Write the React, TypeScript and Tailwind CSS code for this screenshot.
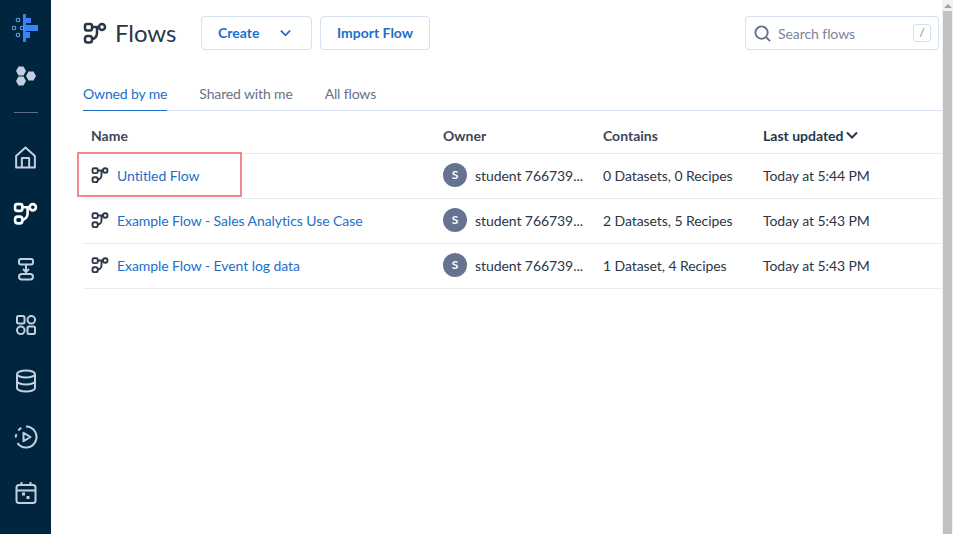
const FlowIcon = ({ className }: { className: string }) => (
  <svg viewBox="0 0 24 24" fill="none" stroke="currentColor" strokeWidth="2.5" className={className}>
    <rect x="2" y="3" width="7" height="6.5" rx="2" />
    <rect x="2" y="15" width="7" height="6.5" rx="2.6" />
    <circle cx="19" cy="6" r="3" />
    <path d="M9 6h7M14 6v6c0 3-2 6-5 6" />
  </svg>
);

const Chevron = ({ className }: { className: string }) => (
  <svg viewBox="0 0 12 8" fill="none" stroke="currentColor" strokeWidth="2" className={className}>
    <path d="M1 1.5l5 5 5-5" />
  </svg>
);

const rows = [
  { name: "Untitled Flow", contains: "0 Datasets, 0 Recipes", updated: "Today at 5:44 PM" },
  { name: "Example Flow - Sales Analytics Use Case", contains: "2 Datasets, 5 Recipes", updated: "Today at 5:43 PM" },
  { name: "Example Flow - Event log data", contains: "1 Dataset, 4 Recipes", updated: "Today at 5:43 PM" },
];

function Sidebar() {
  const c = "text-[#c3cfe0]";
  const item = "h-[56px] flex items-center justify-center";
  return (
    <aside className="w-[51px] shrink-0 h-full bg-[#00263f] flex flex-col items-center">
      <svg viewBox="0 0 28 30" className="w-[28px] h-[30px] mt-[13px]" fill="none">
        <rect x="11" y="1" width="3" height="28" fill="#3b82f6" />
        <rect x="14" y="5" width="5" height="5" fill="#3b82f6" />
        <rect x="14" y="12" width="12" height="6" fill="#3b82f6" />
        <rect x="14" y="19" width="4" height="6" fill="#3b82f6" />
        <circle cx="6" cy="7" r="1.800" stroke="#6f9fe8" strokeWidth="1.100" />
        <circle cx="2" cy="15" r="1.800" stroke="#6f9fe8" strokeWidth="1.100" />
        <circle cx="10" cy="15" r="1.800" stroke="#6f9fe8" strokeWidth="1.100" />
        <circle cx="6" cy="22" r="1.800" stroke="#6f9fe8" strokeWidth="1.100" />
      </svg>
      <svg viewBox="0 0 20 20" className="w-[20px] h-[20px] mt-[23px]" fill="#c3cfe0">
        <polygon points="0,5 2.500,0.400 7.500,0.400 10,5 7.500,9.600 2.500,9.600" />
        <polygon points="10,10 12.500,5.400 17.500,5.400 20,10 17.500,14.600 12.500,14.600" />
        <polygon points="0,15 2.500,10.400 7.500,10.400 10,15 7.500,19.600 2.500,19.600" />
      </svg>
      <div className="w-[24px] h-px bg-[#5c6f86] mt-[26px] mb-[16px]" />
      <div className={item}>
        <svg viewBox="0 0 24 24" fill="none" stroke="currentColor" strokeWidth="1.900" strokeLinejoin="round" className={`w-[25px] h-[25px] ${c}`}>
          <path d="M3 10.500L12 2.500l9 8V21.500H3z" />
          <path d="M8.500 21.500V12.500h7v9" />
        </svg>
      </div>
      <div className={item}>
        <FlowIcon className="w-[25px] h-[25px] text-white" />
      </div>
      <div className={item}>
        <svg viewBox="0 0 24 24" fill="none" stroke="currentColor" strokeWidth="2" className={`w-[24px] h-[24px] ${c}`}>
          <rect x="5" y="2" width="14" height="5.500" rx="2" />
          <rect x="5" y="17" width="14" height="5.500" rx="2.700" />
          <path d="M12 7.500v7M9 12l3 3 3-3" />
        </svg>
      </div>
      <div className={item}>
        <svg viewBox="0 0 24 24" fill="none" stroke="currentColor" strokeWidth="2" className={`w-[24px] h-[24px] ${c}`}>
          <rect x="3" y="3" width="7.500" height="7.500" rx="1.500" />
          <circle cx="17.300" cy="6.800" r="3.800" />
          <circle cx="6.800" cy="17.300" r="3.800" />
          <rect x="13.500" y="13.500" width="7.500" height="7.500" rx="1.500" />
        </svg>
      </div>
      <div className={item}>
        <svg viewBox="0 0 24 24" fill="none" stroke="currentColor" strokeWidth="2" className={`w-[24px] h-[24px] ${c}`}>
          <ellipse cx="12" cy="5" rx="9" ry="3.500" />
          <path d="M3 5v14c0 2 4 3.500 9 3.500s9-1.500 9-3.500V5M3 12c0 2 4 3.500 9 3.500s9-1.500 9-3.500" />
        </svg>
      </div>
      <div className={item}>
        <svg viewBox="0 0 24 24" fill="none" stroke="currentColor" strokeWidth="2" className={`w-[24px] h-[24px] ${c}`}>
          <path d="M12 1.500a10.500 10.500 0 1 1-8.500 16.700" />
          <path d="M1.700 12.500a10.500 10.500 0 0 1 .7-3.500M4.300 5.500a10.500 10.500 0 0 1 3-2.700" />
          <path d="M9.500 7.800l7 4.200-7 4.200z" strokeLinejoin="round" />
        </svg>
      </div>
      <div className={item}>
        <svg viewBox="0 0 24 24" fill="none" stroke="currentColor" strokeWidth="2" className={`w-[24px] h-[24px] ${c}`}>
          <rect x="2.500" y="4" width="19" height="18" rx="2.500" />
          <path d="M3 9.500h18M7.500 1v4M16.500 1v4" />
          <path d="M8 13l3 0M12.500 16.500l3 0" strokeWidth="3" />
        </svg>
      </div>
    </aside>
  );
}

export default function App() {
  return (
    <div className="w-[953px] h-[534px] flex overflow-hidden bg-white font-['Lato',sans-serif] text-[14px] tracking-[-0.07px] text-[#2b3648]">
      <Sidebar />
      <main className="flex-1 relative flex flex-col pl-[32px] min-w-0">
        <header className="flex items-center h-[34px] mt-[16px] pr-[14px]">
          <FlowIcon className="w-[24px] h-[24px] text-[#2b3648]" />
          <h1 className="text-[24px] font-normal ml-[8px] w-[86px] text-[#2b3648]">Flows</h1>
          <button className="w-[111px] h-[34px] pb-[1px] border border-[#d5e0f0] rounded-[4px] font-bold tracking-normal text-[#1b6fc9] flex items-center pl-[16px]">
            Create
            <Chevron className="w-[11px] h-[8px] ml-[21px]" />
          </button>
          <button className="w-[110px] h-[34px] pb-[1px] ml-[8px] border border-[#d5e0f0] rounded-[4px] font-bold tracking-normal text-[#1b6fc9]">
            Import Flow
          </button>
          <div className="ml-auto w-[194px] h-[34px] border border-[#d5e0f0] rounded-[4px] flex items-center pl-[8px] pr-[7px]">
            <svg viewBox="0 0 18 18" fill="none" stroke="#64718f" strokeWidth="2" className="w-[17px] h-[17px]">
              <circle cx="8" cy="8" r="6.500" />
              <path d="M12.500 12.500L17 17" />
            </svg>
            <span className="ml-[7px] text-[#7b8499]">Search flows</span>
            <span className="ml-auto w-[18px] h-[18px] border border-[#d5e0f0] rounded-[3px] text-[12px] leading-[16px] text-center text-[#7b8499]">/</span>
          </div>
        </header>

        <nav className="flex gap-[32px] mt-[27px] mr-[10px] h-[34px] border-b border-[#d5e0f0] tracking-[-0.14px]">
          <span className="h-[34px] leading-[33px] border-b border-[#1b6fc9] text-[#1b6fc9]">Owned by me</span>
          <span className="leading-[33px] text-[#687286]">Shared with me</span>
          <span className="leading-[33px] text-[#687286]">All flows</span>
        </nav>

        <div className="mr-[10px]">
          <div className="flex items-center h-[43px] pl-[8px] pt-[6px] border-b border-[#e2e7f0] font-bold tracking-normal text-[#3c4658]">
            <span className="w-[352px]">Name</span>
            <span className="w-[160px]">Owner</span>
            <span className="w-[160px]">Contains</span>
            <span className="flex items-center text-[#2b3648]">
              Last updated
              <Chevron className="w-[12px] h-[8px] ml-[2px]" />
            </span>
          </div>
          {rows.map((r) => (
            <div key={r.name} className="flex items-center h-[45px] pl-[8px] pb-[2px] border-b border-[#e8ecf3]">
              <div className="w-[352px] flex items-center">
                <FlowIcon className="w-[18px] h-[18px] text-[#2b3648]" />
                <a className="ml-[8px] text-[#1b6fc9]">{r.name}</a>
              </div>
              <div className="w-[160px] flex items-center">
                <span className="w-[24px] h-[24px] rounded-full bg-[#667390] text-white text-[12px] font-bold flex items-center justify-center">S</span>
                <span className="ml-[8px]">student 766739...</span>
              </div>
              <span className="w-[160px]">{r.contains}</span>
              <span>{r.updated}</span>
            </div>
          ))}
        </div>

        <div className="absolute left-[26px] top-[152px] w-[165px] h-[45px] border-2 border-[#f08a8a]" />

        <div className="absolute right-0 top-0 bottom-0 w-[11px] bg-[#f1f1f1] flex flex-col items-center">
          <svg viewBox="0 0 8 4" className="w-[8px] h-[4px] mt-[4px]" fill="#a3a3a3"><path d="M4 0l4 4H0z" /></svg>
          <div className="w-[9px] flex-1 mt-[3px] bg-[#c1c1c1]" />
        </div>
      </main>
    </div>
  );
}
